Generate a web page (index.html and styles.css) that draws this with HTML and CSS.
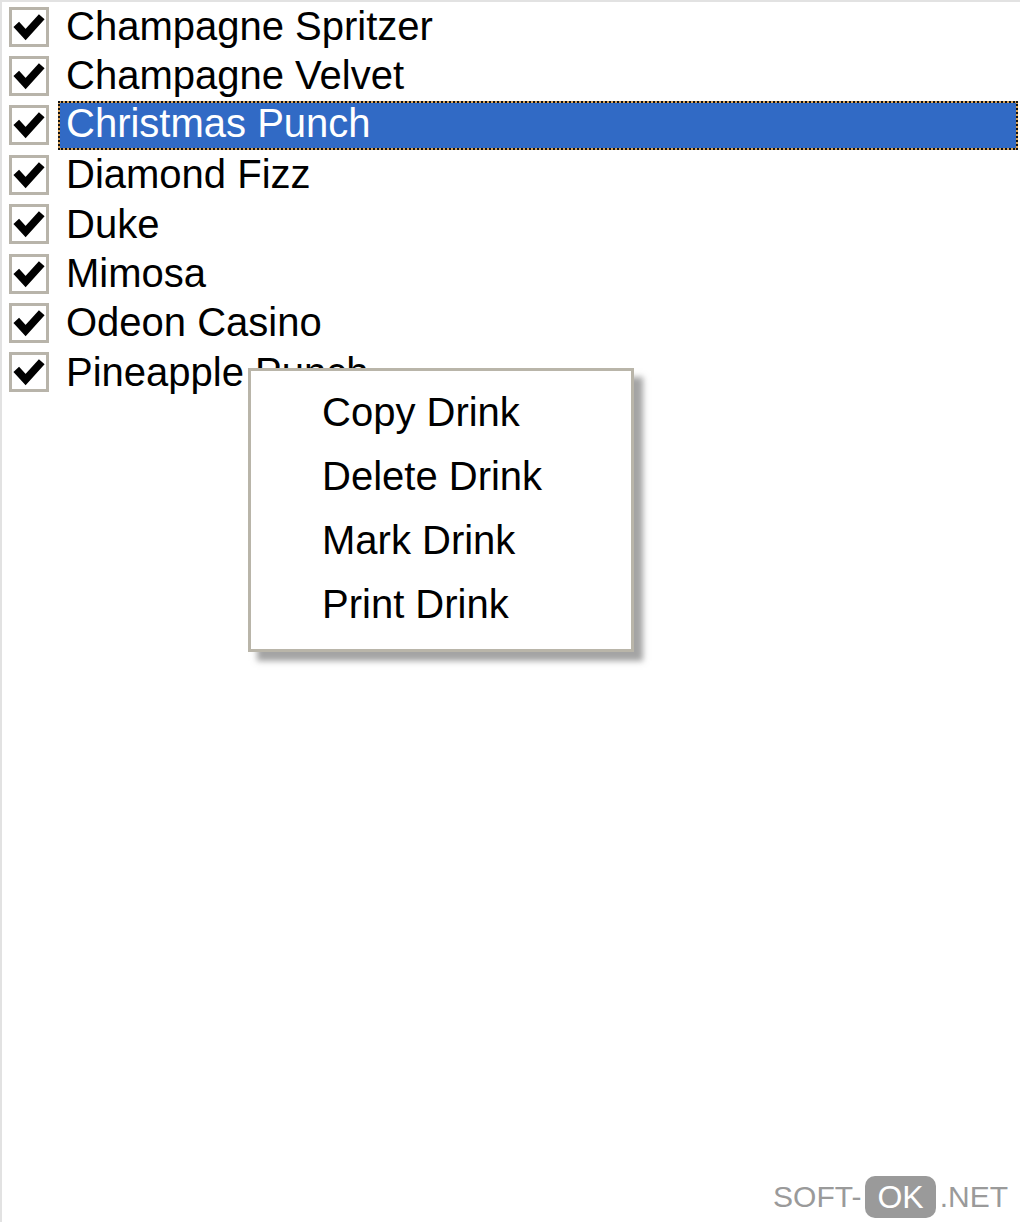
FILE: index.html
```html
<!DOCTYPE html>
<html lang="en">
<head>
  <meta charset="UTF-8" />
  <title>Drinks</title>
  <link rel="stylesheet" href="styles.css">
</head>
<body>
  <div class="listbox">
    <div class="row">
      <span class="check"><svg viewBox="0 0 40 40"><polyline points="5,17 16,29 35,8" /></svg></span>
      <span class="label">Champagne Spritzer</span>
    </div>
    <div class="row">
      <span class="check"><svg viewBox="0 0 40 40"><polyline points="5,17 16,29 35,8" /></svg></span>
      <span class="label">Champagne Velvet</span>
    </div>
    <div class="row selected">
      <span class="check"><svg viewBox="0 0 40 40"><polyline points="5,17 16,29 35,8" /></svg></span>
      <span class="label">Christmas Punch</span>
    </div>
    <div class="row">
      <span class="check"><svg viewBox="0 0 40 40"><polyline points="5,17 16,29 35,8" /></svg></span>
      <span class="label">Diamond Fizz</span>
    </div>
    <div class="row">
      <span class="check"><svg viewBox="0 0 40 40"><polyline points="5,17 16,29 35,8" /></svg></span>
      <span class="label">Duke</span>
    </div>
    <div class="row">
      <span class="check"><svg viewBox="0 0 40 40"><polyline points="5,17 16,29 35,8" /></svg></span>
      <span class="label">Mimosa</span>
    </div>
    <div class="row">
      <span class="check"><svg viewBox="0 0 40 40"><polyline points="5,17 16,29 35,8" /></svg></span>
      <span class="label">Odeon Casino</span>
    </div>
    <div class="row">
      <span class="check"><svg viewBox="0 0 40 40"><polyline points="5,17 16,29 35,8" /></svg></span>
      <span class="label">Pineapple Punch</span>
    </div>

    <!-- right-click menu -->
    <ul class="context-menu">
      <li>Copy Drink</li>
      <li>Delete Drink</li>
      <li>Mark Drink</li>
      <li>Print Drink</li>
    </ul>
  </div>

  <div class="watermark">SOFT-<span class="ok">OK</span>.NET</div>
</body>
</html>
```

FILE: styles.css
```css
html,
body {
  margin: 0;
  padding: 0;
  background: #fff;
}

body {
  font-family: 'Liberation Sans', Arial, sans-serif;
  color: #000;
  height: 1222px;
  overflow: hidden;
}

.listbox {
  position: relative;
  height: 1220px;
  border-top: 2px solid #e2e2e2;
  border-left: 2px solid #e2e2e2;
}

.row {
  display: flex;
  align-items: center;
  height: 49.4px;
  font-size: 40px;
  line-height: 49.4px;
}

.check {
  width: 34px;
  height: 34px;
  margin-left: 7px;
  border: 3px solid #b8b4aa;
  background: #fff;
  flex-shrink: 0;
}

.check svg {
  display: block;
  width: 34px;
  height: 34px;
}

.check polyline {
  fill: none;
  stroke: #000;
  stroke-width: 9;
  stroke-linejoin: miter;
}

.label {
  margin-left: 9px;
  padding: 0 8px;
  white-space: nowrap;
}

.selected .label {
  flex: 1;
  height: 49px;
  color: #fff;
  background: #316ac5;
  box-shadow: inset 0 0 0 2px #d8a35a;
  outline: 2px dotted #111;
  outline-offset: -2px;
  box-sizing: border-box;
  line-height: 45px;
  margin-right: 2px;
}

.context-menu {
  position: absolute;
  left: 246px;
  top: 366px;
  width: 380px;
  margin: 0;
  padding: 9px 0 13px;
  list-style: none;
  background: #fff;
  border: 3px solid #b9b5a9;
  box-shadow: 9px 9px 6px rgba(90, 90, 90, 0.55);
  font-size: 40px;
}

.context-menu li {
  height: 64px;
  line-height: 64px;
  padding-left: 71px;
}

.watermark {
  position: absolute;
  right: 12px;
  bottom: 4px;
  font-size: 30px;
  color: #9a9a9a;
  display: flex;
  align-items: center;
  height: 42px;
}

.watermark .ok {
  background: #9a9a9a;
  color: #fff;
  border-radius: 10px;
  padding: 0 12px;
  height: 42px;
  line-height: 42px;
  margin: 0 4px;
  font-size: 32px;
}
```
